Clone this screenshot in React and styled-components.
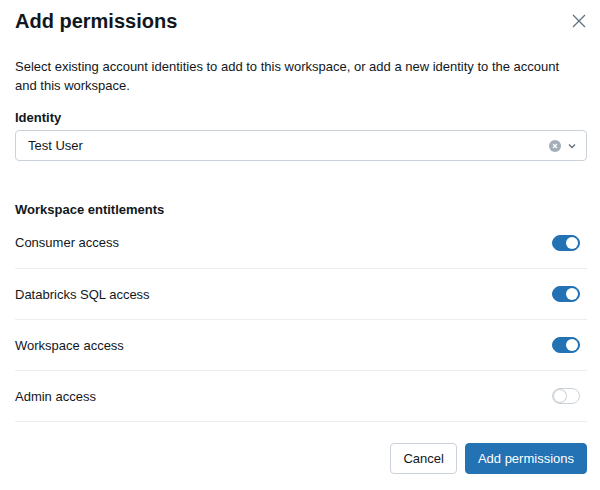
import styled, { createGlobalStyle } from "styled-components";

const GlobalStyle = createGlobalStyle`
  html, body {
    margin: 0;
    padding: 0;
    background: #fff;
  }
  body {
    font-family: "Liberation Sans", Arial, sans-serif;
    color: #1f272d;
  }
`;

const Dialog = styled.div`
  width: 600px;
  height: 490px;
  box-sizing: border-box;
  padding: 9px 13px 0 15px;
  display: flex;
  flex-direction: column;
`;

const Header = styled.header`
  display: flex;
  justify-content: space-between;
  align-items: center;
  height: 24px;
`;

const Title = styled.h2`
  margin: 0;
  font-size: 20px;
  font-weight: 700;
  color: #11171c;
`;

const CloseButton = styled.button`
  border: 0;
  background: none;
  padding: 0;
  width: 16px;
  height: 16px;
  display: flex;
  align-items: center;
  justify-content: center;
  color: #5f7281;
  cursor: pointer;
`;

const Description = styled.p`
  margin: 24px 0 0;
  max-width: 565px;
  font-size: 13px;
  line-height: 19px;
  color: #11171c;
`;

const Label = styled.div`
  margin-top: 13px;
  font-size: 13px;
  font-weight: 700;
  line-height: 20px;
  color: #11171c;
`;

const Select = styled.div`
  margin-top: 2px;
  height: 31px;
  box-sizing: border-box;
  border: 1px solid #cbd2d9;
  border-radius: 4px;
  display: flex;
  align-items: center;
  padding: 0 9px 0 12px;
  font-size: 13px;
  color: #11171c;
`;

const SelectValue = styled.span`
  flex: 1;
`;

const SelectIcons = styled.span`
  display: flex;
  align-items: center;
  gap: 6px;
`;

const SectionTitle = styled.h3`
  margin: 39px 0 0;
  font-size: 13px;
  font-weight: 700;
  line-height: 20px;
  color: #11171c;
`;

const List = styled.div`
  display: flex;
  flex-direction: column;
`;

const Row = styled.div`
  height: 51px;
  box-sizing: border-box;
  display: flex;
  align-items: center;
  justify-content: space-between;
  border-bottom: 1px solid #ebeef0;
  font-size: 13px;
  color: #11171c;
  padding-right: 7px;
  &:first-child {
    height: 49px;
    padding-bottom: 3px;
  }
`;

const Track = styled.span`
  width: 28px;
  height: 16px;
  box-sizing: border-box;
  border-radius: 8px;
  background: ${(p) => (p.$on ? "#2272b4" : "#fff")};
  border: 1px solid ${(p) => (p.$on ? "#2272b4" : "#cbd2d9")};
  display: flex;
  align-items: center;
  justify-content: ${(p) => (p.$on ? "flex-end" : "flex-start")};
  padding: 0 1px;
`;

const Knob = styled.span`
  width: 12px;
  height: 12px;
  border-radius: 50%;
  background: #fff;
  box-shadow: ${(p) => (p.$on ? "none" : "0 0 0 1px #cbd2d9")};
`;

const Footer = styled.footer`
  margin-top: 21px;
  display: flex;
  justify-content: flex-end;
  gap: 8px;
`;

const Button = styled.button`
  height: 31px;
  box-sizing: border-box;
  border-radius: 4px;
  padding: 0 12px;
  font-family: inherit;
  font-size: 13px;
  cursor: pointer;
  border: 1px solid ${(p) => (p.$primary ? "#2272b4" : "#cbd2d9")};
  background: ${(p) => (p.$primary ? "#2272b4" : "#fff")};
  color: ${(p) => (p.$primary ? "#fff" : "#11171c")};
`;

const Toggle = ({ on }) => (
  <Track $on={on}>
    <Knob $on={on} />
  </Track>
);

const entitlements = [
  { name: "Consumer access", on: true },
  { name: "Databricks SQL access", on: true },
  { name: "Workspace access", on: true },
  { name: "Admin access", on: false },
];

export default function App() {
  return (
    <>
      <GlobalStyle />
      <Dialog>
        <Header>
          <Title>Add permissions</Title>
          <CloseButton aria-label="Close">
            <svg width="14" height="14" viewBox="0 0 14 14">
              <path d="M1 1L13 13M13 1L1 13" stroke="currentColor" strokeWidth="1.3" />
            </svg>
          </CloseButton>
        </Header>
        <Description>
          Select existing account identities to add to this workspace, or add a new identity to the account
          and this workspace.
        </Description>
        <Label>Identity</Label>
        <Select>
          <SelectValue>Test User</SelectValue>
          <SelectIcons>
            <svg width="12" height="12" viewBox="0 0 12 12">
              <circle cx="6" cy="6" r="6" fill="#a3aeb8" />
              <path d="M4 4L8 8M8 4L4 8" stroke="#fff" strokeWidth="1.3" />
            </svg>
            <svg width="10" height="10" viewBox="0 0 10 10">
              <path d="M2 3.5L5 6.5L8 3.5" fill="none" stroke="#5f7281" strokeWidth="1.4" />
            </svg>
          </SelectIcons>
        </Select>
        <SectionTitle>Workspace entitlements</SectionTitle>
        <List>
          {entitlements.map((e) => (
            <Row key={e.name}>
              <span>{e.name}</span>
              <Toggle on={e.on} />
            </Row>
          ))}
        </List>
        <Footer>
          <Button>Cancel</Button>
          <Button $primary>Add permissions</Button>
        </Footer>
      </Dialog>
    </>
  );
}
